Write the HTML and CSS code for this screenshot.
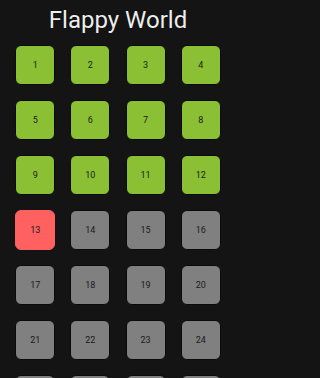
FILE: index.html
```html
<!DOCTYPE html>
<html>
<head>
<meta charset="utf-8">
<meta name="viewport" content="width=236">
<link rel="stylesheet" href="styles.css">
</head>
<body>
<main class="screen">
<h1 class="title">Flappy World</h1>
<div class="grid">
  <div class="tile done">1</div>
  <div class="tile done">2</div>
  <div class="tile done">3</div>
  <div class="tile done">4</div>
  <div class="tile done">5</div>
  <div class="tile done">6</div>
  <div class="tile done">7</div>
  <div class="tile done">8</div>
  <div class="tile done">9</div>
  <div class="tile done">10</div>
  <div class="tile done">11</div>
  <div class="tile done">12</div>
  <div class="tile current">13</div>
  <div class="tile">14</div>
  <div class="tile">15</div>
  <div class="tile">16</div>
  <div class="tile">17</div>
  <div class="tile">18</div>
  <div class="tile">19</div>
  <div class="tile">20</div>
  <div class="tile">21</div>
  <div class="tile">22</div>
  <div class="tile">23</div>
  <div class="tile">24</div>
  <div class="tile">25</div>
  <div class="tile">26</div>
  <div class="tile">27</div>
  <div class="tile">28</div>
</div>
</main>
</body>
</html>
```
FILE: styles.css
```css
html, body {
  margin: 0;
  padding: 0;
  background: #141414;
  overflow: hidden;
  height: 378px;
}
body {
  font-family: Roboto, "Noto Sans", sans-serif;
}
.screen {
  width: 236px;
  height: 378px;
  overflow: hidden;
}
.title {
  margin: 6px 0 11px;
  font-size: 24px;
  line-height: 28px;
  font-weight: 400;
  color: #eeeeee;
  text-align: center;
  text-shadow: 0 0 1px #000;
}
.grid {
  display: grid;
  grid-template-columns: repeat(4, 40px);
  justify-content: space-evenly;
  row-gap: 15px;
}
.tile {
  box-sizing: border-box;
  width: 40px;
  height: 40px;
  border-radius: 6px;
  border: 1px solid #0a0a0a;
  background: #808080;
  color: #1a1a1a;
  font-size: 9px;
  display: flex;
  align-items: center;
  justify-content: center;
}
.tile.done {
  background: #8bc034;
}
.tile.current {
  background: #ff6161;
  border-color: #ff6161;
}
```
